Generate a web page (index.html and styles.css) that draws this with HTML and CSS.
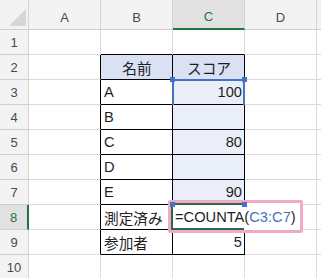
FILE: index.html
```html
<!DOCTYPE html>
<html lang="ja">
<head>
    <meta charset="UTF-8">
    <title>COUNTA</title>
    <link rel="stylesheet" href="styles.css">
</head>
<body>
<div class="sheet">
    <!-- 列見出し -->
    <div class="corner">
        <svg width="28" height="29" viewBox="0 0 28 29"><polygon points="26,9 26,26 9,26" fill="#d6d6d6"/></svg>
    </div>
    <div class="col-head">A</div>
    <div class="col-head">B</div>
    <div class="col-head is-active">C</div>
    <div class="col-head">D</div>
    <div class="col-head"></div>

    <!-- 1 -->
    <div class="row-head">1</div>
    <div class="cell"></div>
    <div class="cell tb-t"></div>
    <div class="cell tb-t"></div>
    <div class="cell"></div>
    <div class="cell"></div>

    <!-- 2 -->
    <div class="row-head">2</div>
    <div class="cell tb-l"></div>
    <div class="cell tb head-fill center">名前</div>
    <div class="cell tb head-fill center">スコア</div>
    <div class="cell"></div>
    <div class="cell"></div>

    <!-- 3 -->
    <div class="row-head">3</div>
    <div class="cell tb-l"></div>
    <div class="cell tb">A</div>
    <div class="cell tb score num">
        100
        <div class="ref-range">
            <span class="handle tl"></span><span class="handle tr"></span>
            <span class="handle bl"></span><span class="handle br"></span>
        </div>
    </div>
    <div class="cell"></div>
    <div class="cell"></div>

    <!-- 4 -->
    <div class="row-head">4</div>
    <div class="cell tb-l"></div>
    <div class="cell tb">B</div>
    <div class="cell tb score num"></div>
    <div class="cell"></div>
    <div class="cell"></div>

    <!-- 5 -->
    <div class="row-head">5</div>
    <div class="cell tb-l"></div>
    <div class="cell tb">C</div>
    <div class="cell tb score num">80</div>
    <div class="cell"></div>
    <div class="cell"></div>

    <!-- 6 -->
    <div class="row-head">6</div>
    <div class="cell tb-l"></div>
    <div class="cell tb">D</div>
    <div class="cell tb score num"></div>
    <div class="cell"></div>
    <div class="cell"></div>

    <!-- 7 -->
    <div class="row-head">7</div>
    <div class="cell tb-l"></div>
    <div class="cell tb">E</div>
    <div class="cell tb score num">90</div>
    <div class="cell"></div>
    <div class="cell"></div>

    <!-- 8: 入力中のセル -->
    <div class="row-head is-active">8</div>
    <div class="cell tb-l"></div>
    <div class="cell tb">測定済み</div>
    <div class="cell tb editing">
        <div class="active-cell"></div>
        <div class="edit-box">=COUNTA(<span class="ref">C3:C7</span>)</div>
    </div>
    <div class="cell"></div>
    <div class="cell"></div>

    <!-- 9 -->
    <div class="row-head">9</div>
    <div class="cell tb-l"></div>
    <div class="cell tb">参加者</div>
    <div class="cell tb num">5</div>
    <div class="cell"></div>
    <div class="cell"></div>

    <!-- 10 -->
    <div class="row-head">10</div>
    <div class="cell"></div>
    <div class="cell"></div>
    <div class="cell"></div>
    <div class="cell"></div>
    <div class="cell"></div>
</div>
</body>
</html>
```

FILE: styles.css
```css
body {
    margin: 0;
    overflow: hidden;
    background-color: #fff;
    font-family: "Liberation Sans", "Noto Sans CJK JP", sans-serif;
}
.sheet {
    display: grid;
    grid-template-columns: 29px repeat(4, 72px) 1fr;
    grid-template-rows: 30px repeat(10, 25px);
    width: 321px;
    height: 278px;
    overflow: hidden;
}

/* 見出し */
.corner,
.col-head,
.row-head {
    box-sizing: border-box;
    background-color: #f3f3f3;
    border-right: 1px solid #d4d4d4;
    border-bottom: 1px solid #cdcdcd;
    color: #4a4a4a;
    font-size: 13px;
    display: flex;
    align-items: center;
    justify-content: center;
}
.corner {
    padding: 0;
}
.col-head {
    padding-top: 5px;
}
.col-head.is-active {
    background-color: #e1e1e1;
    color: #217346;
    border-bottom: 2px solid #217346;
}
.row-head.is-active {
    background-color: #e1e1e1;
    color: #217346;
    border-right: 2px solid #217346;
}

/* セル */
.cell {
    box-sizing: border-box;
    position: relative;
    border-right: 1px solid #dcdcdc;
    border-bottom: 1px solid #dcdcdc;
    font-size: 14.67px;
    color: #1f1f1f;
    display: flex;
    align-items: center;
    padding: 0 2px 0 3px;
    white-space: nowrap;
}
.cell.center { justify-content: center; }
.cell.num { justify-content: flex-end; }

/* 表の罫線 */
.cell.tb {
    border-right-color: #000;
    border-bottom-color: #000;
}
.cell.tb-l { border-right-color: #000; }
.cell.tb-t { border-bottom-color: #000; }

.head-fill { background-color: #d9e1f2; }
.score { background-color: #e9eef8; }

/* 数式が参照している範囲 */
.ref-range {
    position: absolute;
    left: -1px;
    top: -1px;
    width: 73px;
    height: 126px;
    box-sizing: border-box;
    border: 2px solid #4472c4;
    pointer-events: none;
}
.handle {
    position: absolute;
    width: 5px;
    height: 5px;
    background-color: #4472c4;
    z-index: 3;
}
.handle.tl { left: -4px; top: -4px; }
.handle.tr { right: -4px; top: -4px; }
.handle.bl { left: -4px; bottom: -4px; }
.handle.br { right: -4px; bottom: -4px; }

/* 入力中のセル */
.active-cell {
    position: absolute;
    left: -2px;
    top: -2px;
    width: 73px;
    height: 27px;
    box-sizing: border-box;
    border: 2px solid #2b6a46;
    border-right: none;
    z-index: 2;
}
.edit-box {
    position: absolute;
    left: -5px;
    top: -5px;
    width: 135px;
    height: 33px;
    box-sizing: border-box;
    border: 3px solid #f3a8c6;
    border-radius: 2px;
    background-color: #fff;
    padding-left: 4px;
    display: flex;
    align-items: center;
    font-size: 14.67px;
    color: #1f1f1f;
    z-index: 1;
}
.edit-box .ref {
    color: #4472c4;
}
```
